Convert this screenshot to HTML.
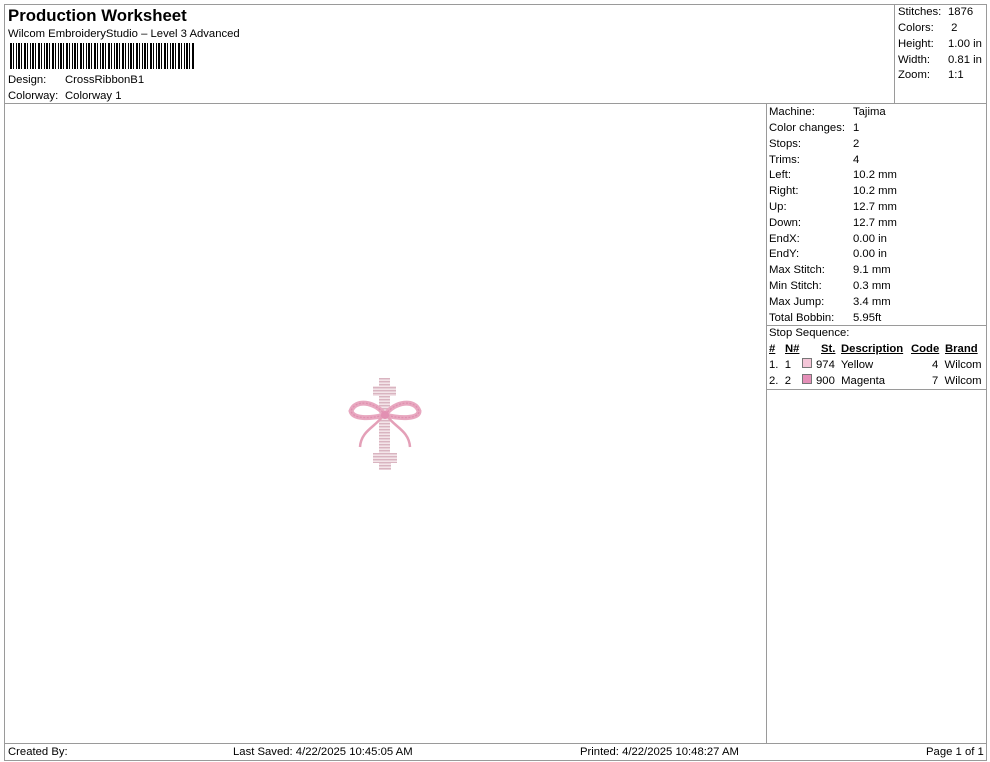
<!DOCTYPE html>
<html><head><meta charset="utf-8"><style>
*{margin:0;padding:0;box-sizing:border-box}
body{width:990px;height:762px;background:#fff;position:relative;font-family:"Liberation Sans",Arial,sans-serif;font-size:11.3px;color:#000;overflow:hidden}
.a{position:absolute;white-space:nowrap}
.box{position:absolute;border:1px solid #9a9a9a}
.r{position:absolute;left:769px;white-space:nowrap}
.r span{position:absolute;left:84px}
.s{position:absolute;left:898px;white-space:nowrap}
.s span{position:absolute;left:50px}
u{text-decoration:underline;font-weight:bold}
.sw{display:inline-block;width:10px;height:10px;border:1px solid #777;vertical-align:-1px}
</style></head><body>
<div class="box" style="left:4px;top:4px;width:983px;height:757px"></div>
<div class="box" style="left:4px;top:4px;width:983px;height:100px"></div>
<div class="box" style="left:894px;top:4px;width:93px;height:100px"></div>
<div class="box" style="left:766px;top:103px;width:221px;height:641px"></div>
<div class="box" style="left:766px;top:325px;width:221px;height:65px"></div>
<div class="box" style="left:4px;top:743px;width:983px;height:18px"></div>
<div class="a" style="left:8px;top:6px;font-size:16.8px;font-weight:bold">Production Worksheet</div>
<div class="a" style="left:8px;top:28px">Wilcom EmbroideryStudio – Level 3 Advanced</div>
<div class="a" style="left:10px;top:43px;width:185px;height:26px;background:repeating-linear-gradient(90deg,#000 0 2px,#fff 2px 3px,#000 3px 4px,#fff 4px 6px,#000 6px 7px,#fff 7px 8px,#000 8px 10px,#fff 10px 11px,#000 11px 12px,#fff 12px 14px)"></div>
<div class="a" style="left:8px;top:74px">Design:</div><div class="a" style="left:65px;top:74px">CrossRibbonB1</div>
<div class="a" style="left:8px;top:90px">Colorway:</div><div class="a" style="left:65px;top:90px">Colorway 1</div>
<div class="s" style="top:6px">Stitches:<span>1876</span></div>
<div class="s" style="top:22px">Colors:<span>&nbsp;2</span></div>
<div class="s" style="top:38px">Height:<span>1.00 in</span></div>
<div class="s" style="top:54px">Width:<span>0.81 in</span></div>
<div class="s" style="top:69px">Zoom:<span>1:1</span></div>
<div class="r" style="top:106px">Machine:<span>Tajima</span></div>
<div class="r" style="top:122px">Color changes:<span>1</span></div>
<div class="r" style="top:138px">Stops:<span>2</span></div>
<div class="r" style="top:154px">Trims:<span>4</span></div>
<div class="r" style="top:169px">Left:<span>10.2 mm</span></div>
<div class="r" style="top:185px">Right:<span>10.2 mm</span></div>
<div class="r" style="top:201px">Up:<span>12.7 mm</span></div>
<div class="r" style="top:217px">Down:<span>12.7 mm</span></div>
<div class="r" style="top:233px">EndX:<span>0.00 in</span></div>
<div class="r" style="top:248px">EndY:<span>0.00 in</span></div>
<div class="r" style="top:264px">Max Stitch:<span>9.1 mm</span></div>
<div class="r" style="top:280px">Min Stitch:<span>0.3 mm</span></div>
<div class="r" style="top:296px">Max Jump:<span>3.4 mm</span></div>
<div class="r" style="top:312px">Total Bobbin:<span>5.95ft</span></div>
<div class="r" style="top:327px">Stop Sequence:</div>
<div class="a" style="left:769px;top:343px"><u>#</u></div>
<div class="a" style="left:785px;top:343px"><u>N#</u></div>
<div class="a" style="left:821px;top:343px"><u>St.</u></div>
<div class="a" style="left:841px;top:343px"><u>Description</u></div>
<div class="a" style="left:911px;top:343px"><u>Code</u></div>
<div class="a" style="left:945px;top:343px"><u>Brand</u></div>
<div class="a" style="left:769px;top:359px">1.&nbsp; 1</div>
<div class="a" style="left:802px;top:358px"><span class="sw" style="background:#f4c6d8"></span></div>
<div class="a" style="left:816px;top:359px">974&nbsp; Yellow</div>
<div class="a" style="left:932px;top:359px">4&nbsp; Wilcom</div>
<div class="a" style="left:769px;top:375px">2.&nbsp; 2</div>
<div class="a" style="left:802px;top:374px"><span class="sw" style="background:#e58fb8"></span></div>
<div class="a" style="left:816px;top:375px">900&nbsp; Magenta</div>
<div class="a" style="left:932px;top:375px">7&nbsp; Wilcom</div>
<svg class="a" style="left:345px;top:375px" width="80" height="100" viewBox="0 0 80 100">
<defs><pattern id="st" width="4" height="3" patternUnits="userSpaceOnUse"><rect width="4" height="3" fill="#f3e4e8"/><rect width="4" height="1.4" fill="#d9b4c0"/></pattern></defs>
<path d="M34 3h11v8h6v10h-6v57h7v10h-6v7H34v-7h-6V78h6V21h-6V11h6z" fill="url(#st)"/>
<g fill="none" stroke="#e8a8c0" stroke-width="5"><path d="M40 40C30 26 10 24 6 36c2 8 18 8 34 4C56 44 74 44 74 36 70 24 50 26 40 40z"/></g>
<g fill="none" stroke="#e090b0" stroke-width="1.3" stroke-dasharray="2 1.5"><path d="M40 40C30 26 10 24 6 36c2 8 18 8 34 4C56 44 74 44 74 36 70 24 50 26 40 40z"/></g>
<g fill="none" stroke="#e4a0b8" stroke-width="2.5"><path d="M37 42C30 52 16 56 15 72M43 42C50 52 64 56 65 72"/></g>
<circle cx="40" cy="40" r="4" fill="#e290b2"/>
</svg>
<div class="a" style="left:8px;top:746px">Created By:</div>
<div class="a" style="left:233px;top:746px">Last Saved: 4/22/2025 10:45:05 AM</div>
<div class="a" style="left:580px;top:746px">Printed: 4/22/2025 10:48:27 AM</div>
<div class="a" style="left:926px;top:746px">Page 1 of 1</div>
</body></html>
